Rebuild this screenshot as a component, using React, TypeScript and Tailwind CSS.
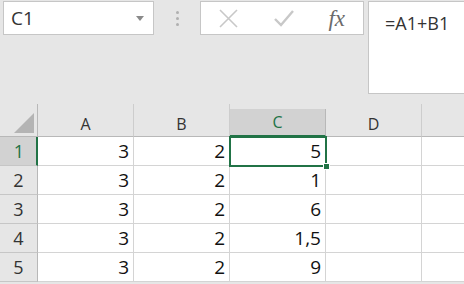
import React from 'react';

const cols = ['A', 'B', 'C', 'D'];
const rows = [
  ['3', '2', '5'],
  ['3', '2', '1'],
  ['3', '2', '6'],
  ['3', '2', '1,5'],
  ['3', '2', '9'],
];

const font = { fontFamily: '"Open Sans", "Liberation Sans", sans-serif' };

export default function App() {
  return (
    <div className="w-[464px] h-[284px] bg-[#e6e6e6] overflow-hidden text-[#262626]" style={font}>
      {/* formula bar */}
      <div className="flex items-start h-[104px] pt-px">
        <div className="ml-[3px] w-[151px] h-[34px] bg-white border border-[#c6c6c6] flex items-center pl-[7px] pr-[9px]">
          <span className="text-[19px] text-[#333] leading-none">C1</span>
          <svg className="ml-auto" width="8" height="5" viewBox="0 0 8 5">
            <path d="M0 0h8L4 5z" fill="#8a8a8a" />
          </svg>
        </div>
        <div className="w-[46px] h-[34px] flex flex-col items-center justify-center gap-[3px]">
          <span className="w-[3px] h-[3px] rounded-full bg-[#b0b0b0]" />
          <span className="w-[3px] h-[3px] rounded-full bg-[#b0b0b0]" />
          <span className="w-[3px] h-[3px] rounded-full bg-[#b0b0b0]" />
        </div>
        <div className="w-[164px] h-[34px] bg-white border border-[#c6c6c6] flex items-center">
          <svg className="ml-[18px]" width="19" height="19" viewBox="0 0 19 19">
            <path d="M1 1L18 18M18 1L1 18" stroke="#c8c8c8" strokeWidth="1.6" />
          </svg>
          <svg className="ml-[36px]" width="20" height="17" viewBox="0 0 20 17">
            <path d="M1 9l6 6L19 1" stroke="#c8c8c8" strokeWidth="2.4" fill="none" />
          </svg>
          <span
            className="ml-auto mr-[18px] text-[23px] italic text-[#6b6b6b] leading-none"
            style={{ fontFamily: '"Liberation Serif", serif' }}
          >
            fx
          </span>
        </div>
        <div className="ml-[4px] flex-1 h-[93px] bg-white border border-[#c6c6c6] border-r-0 pl-[16px] pt-[8px]">
          <span className="text-[18px] text-[#333]">=A1+B1</span>
        </div>
      </div>

      {/* grid */}
      <div className="relative">
        <div className="grid grid-cols-[38px_96px_96px_96px_96px_1fr]">
          <div className="h-[33px] border-r border-b border-[#b8b8b8] flex items-end justify-end pr-[3px] pb-[3px]">
            <svg width="20" height="20" viewBox="0 0 20 20">
              <path d="M20 0V20H0z" fill="#b4b4b4" />
            </svg>
          </div>
          {cols.map((c) =>
            c === 'C' ? (
              <div key={c} className="h-[33px] flex items-end">
                <div className="w-full h-[28px] bg-[#d2d2d2] border-r border-[#b8b8b8] border-b-2 border-b-[#217346] flex items-center justify-center text-[16px] text-[#217346]">
                  {c}
                </div>
              </div>
            ) : (
              <div
                key={c}
                className="h-[33px] border-r border-b border-[#cdcdcd] border-b-[#b8b8b8] flex items-center justify-center pt-[7px] text-[16px] text-[#333]"
              >
                {c}
              </div>
            )
          )}
          <div className="h-[33px] border-b border-[#b8b8b8]" />

          {rows.map((r, i) => (
            <React.Fragment key={i}>
              <div
                className={
                  i === 0
                    ? 'h-[29px] bg-[#d2d2d2] border-r-2 border-r-[#217346] border-b border-[#c6c6c6] flex items-center justify-center text-[18px] text-[#217346] pl-[2px]'
                    : 'h-[29px] border-r border-b border-[#c6c6c6] border-r-[#b8b8b8] flex items-center justify-center text-[18px] text-[#333]'
                }
              >
                {i + 1}
              </div>
              {r.map((v, j) => (
                <div
                  key={j}
                  className="h-[29px] bg-white border-r border-b border-[#d4d4d4] flex items-center justify-end pr-[4px] text-[19px] text-[#111]"
                >
                  {v}
                </div>
              ))}
              <div className="h-[29px] bg-white border-r border-b border-[#d4d4d4]" />
              <div className="h-[29px] bg-white border-b border-[#d4d4d4]" />
            </React.Fragment>
          ))}
        </div>

        {/* active cell */}
        <div className="absolute left-[229px] top-[32px] w-[98px] h-[31px] border-2 border-[#217346] pointer-events-none" />
        <div className="absolute left-[323px] top-[59px] w-[7px] h-[7px] bg-[#217346] border border-white pointer-events-none" />
      </div>
    </div>
  );
}
